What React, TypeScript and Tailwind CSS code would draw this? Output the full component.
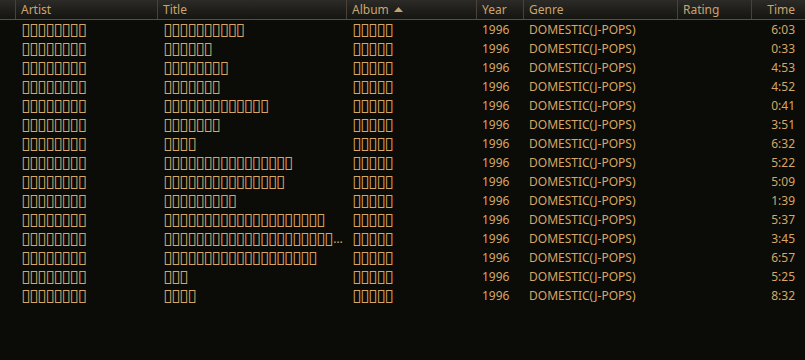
import React from "react";

// Tracks as the player shows them; titles whose glyphs are missing render as boxes
const tofu = (n: number) => "\u25AF".repeat(n);

type Track = { artist: number; title: number; cut?: boolean; time: string };

const TRACKS: Track[] = [
  { artist: 8, title: 10, time: "6:03" },
  { artist: 8, title: 6, time: "0:33" },
  { artist: 8, title: 8, time: "4:53" },
  { artist: 8, title: 7, time: "4:52" },
  { artist: 8, title: 13, time: "0:41" },
  { artist: 8, title: 7, time: "3:51" },
  { artist: 8, title: 4, time: "6:32" },
  { artist: 8, title: 16, time: "5:22" },
  { artist: 8, title: 15, time: "5:09" },
  { artist: 8, title: 9, time: "1:39" },
  { artist: 8, title: 20, time: "5:37" },
  { artist: 8, title: 21, cut: true, time: "3:45" },
  { artist: 8, title: 19, time: "6:57" },
  { artist: 8, title: 3, time: "5:25" },
  { artist: 8, title: 4, time: "8:32" },
];

const GRID = "grid grid-cols-[15px_142px_189px_130px_47px_154px_74px_1fr]";

function Tofu({ n, cut }: { n: number; cut?: boolean }) {
  return (
    <span className="whitespace-nowrap flex items-center h-[19px]">
      <span className="font-['DejaVu_Sans',sans-serif] text-[17px] tracking-[-1.3px] leading-[19px]">{tofu(n)}</span>
      {cut && <span className="ml-[1px]">…</span>}
    </span>
  );
}

function HeaderCell({ label, right, sort }: { label: string; right?: boolean; sort?: boolean }) {
  return (
    <div
      className={`flex items-center h-[19px] border-l border-[#4a4234] pl-[5px] ${
        right ? "justify-end pr-[10px]" : ""
      }`}
    >
      <span>{label}</span>
      {sort && (
        <svg width="9" height="5" viewBox="0 0 9 5" className="ml-[5px] mb-[1px]">
          <path d="M0 5 L4.5 0 L9 5 Z" fill="#c8a06a" />
        </svg>
      )}
    </div>
  );
}

export default function App() {
  return (
    <div className="w-[805px] h-[360px] overflow-hidden bg-[#0b0b08] text-[#d6a766] font-['Noto_Sans',sans-serif] text-[12px] leading-none">
      {/* Header */}
      <div className={`${GRID} bg-gradient-to-b from-[#2c2b28] to-[#141411] border-b border-[#5e4f38] text-[#cda46c]`}>
        <div />
        <HeaderCell label="Artist" />
        <HeaderCell label="Title" />
        <HeaderCell label="Album" sort />
        <HeaderCell label="Year" />
        <HeaderCell label="Genre" />
        <HeaderCell label="Rating" />
        <HeaderCell label="Time" right />
      </div>

      {/* Rows */}
      <div>
        {TRACKS.map((t, i) => (
          <div key={i} className={`${GRID} h-[19px] items-center`}>
            <div />
            <div className="pl-[6px]">
              <Tofu n={t.artist} />
            </div>
            <div className="pl-[6px]">
              <Tofu n={t.title} cut={t.cut} />
            </div>
            <div className="pl-[6px]">
              <Tofu n={5} />
            </div>
            <div className="pl-[6px]">1996</div>
            <div className="pl-[6px]">DOMESTIC(J-POPS)</div>
            <div />
            <div className="text-right pr-[10px]">{t.time}</div>
          </div>
        ))}
      </div>
    </div>
  );
}
